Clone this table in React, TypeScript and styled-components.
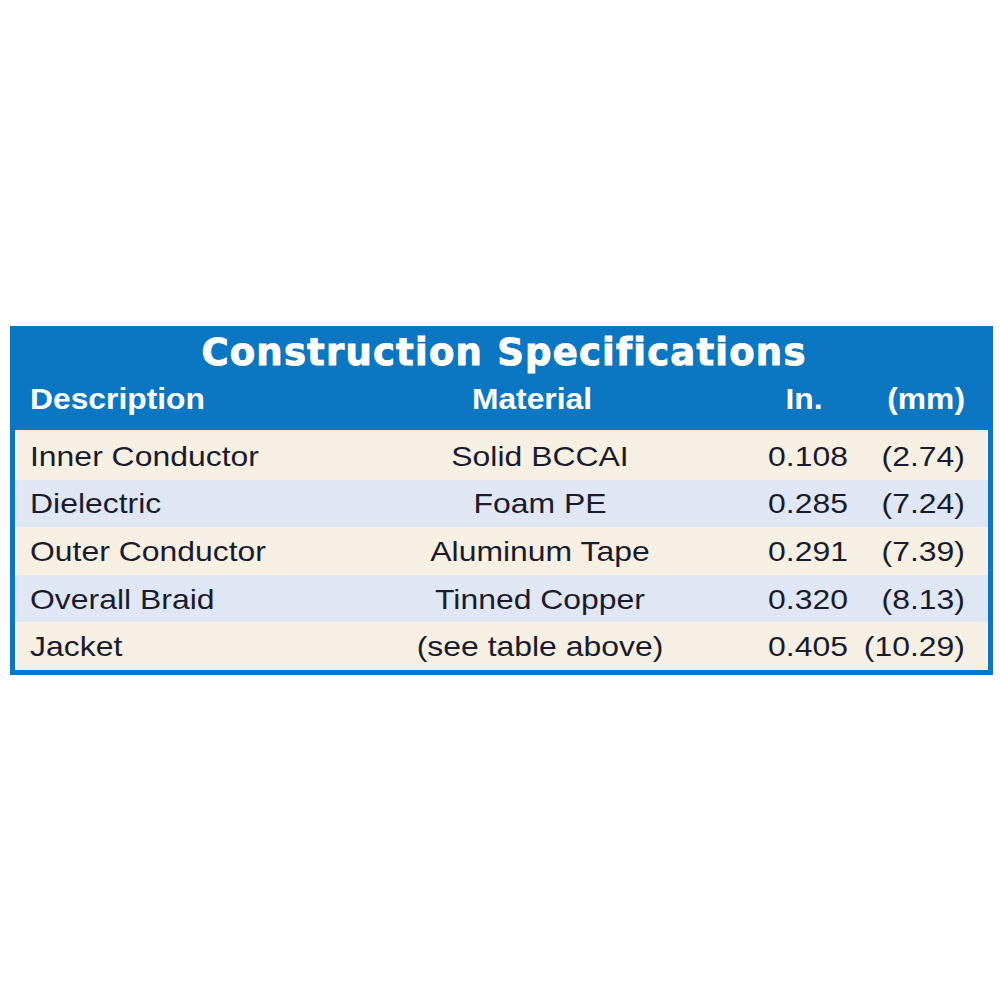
import React from "react";
import styled, { createGlobalStyle } from "styled-components";

const Global = createGlobalStyle`
  html, body { margin: 0; padding: 0; background: #ffffff; }
  body { font-family: "Liberation Sans", Arial, sans-serif; }
`;

const BLUE = "#0b76c1";

const Page = styled.div`
  width: 1000px;
  height: 1000px;
  box-sizing: border-box;
  padding: 326px 7px 0 10px;
  background: #ffffff;
`;

const Box = styled.div`
  width: 983px;
  box-sizing: border-box;
  border: 5px solid ${BLUE};
  background: ${BLUE};
`;

const Title = styled.div`
  height: 42px;
  display: flex;
  align-items: center;
  justify-content: center;
  padding-left: 5px;
  font-family: "DejaVu Sans", Verdana, sans-serif;
  font-weight: bold;
  font-size: 37px;
  letter-spacing: 1.2px;
  color: #ffffff;
  -webkit-text-stroke: 0.9px #ffffff;
`;

const Grid = styled.div`
  display: grid;
  grid-template-columns: 290px 440px 96px 1fr;
  align-items: center;
  padding: 0 23px 0 15px;
`;

const HeadRow = styled(Grid)`
  height: 52px;
  padding-bottom: 5px;
  color: #ffffff;
  font-weight: bold;
  font-size: 30px;
  --sx: 1.06;
`;

const Body = styled.div`
  border-top: 2px solid #e9ecec;
`;

const Row = styled(Grid)<{ $alt: boolean }>`
  height: 47.6px;
  padding-top: 2px;
  box-sizing: border-box;
  background: ${(p) => (p.$alt ? "#dfe7f4" : "#f6f0e4")};
  color: #1b1b2c;
  font-size: 28px;
  --sx: 1.14;
`;

const Cell = styled.div<{ $align: "left" | "center" | "right"; $shift?: number }>`
  text-align: ${(p) => p.$align};
  white-space: nowrap;
  transform: scaleX(var(--sx));
  transform-origin: ${(p) => p.$align} center;
  margin-right: ${(p) => (p.$shift ? `${p.$shift}px` : "0")};
`;

const rows = [
  ["Inner Conductor", "Solid BCCAI", "0.108", "(2.74)"],
  ["Dielectric", "Foam PE", "0.285", "(7.24)"],
  ["Outer Conductor", "Aluminum Tape", "0.291", "(7.39)"],
  ["Overall Braid", "Tinned Copper", "0.320", "(8.13)"],
  ["Jacket", "(see table above)", "0.405", "(10.29)"],
];

export default function App() {
  return (
    <>
      <Global />
      <Page>
        <Box>
          <Title>Construction Specifications</Title>
          <HeadRow>
            <Cell $align="left">Description</Cell>
            <Cell $align="center" $shift={16}>Material</Cell>
            <Cell $align="center" $shift={8}>In.</Cell>
            <Cell $align="right">(mm)</Cell>
          </HeadRow>
          <Body>
            {rows.map((r, i) => (
              <Row key={r[0]} $alt={i % 2 === 1}>
                <Cell $align="left">{r[0]}</Cell>
                <Cell $align="center">{r[1]}</Cell>
                <Cell $align="center">{r[2]}</Cell>
                <Cell $align="right">{r[3]}</Cell>
              </Row>
            ))}
          </Body>
        </Box>
      </Page>
    </>
  );
}
